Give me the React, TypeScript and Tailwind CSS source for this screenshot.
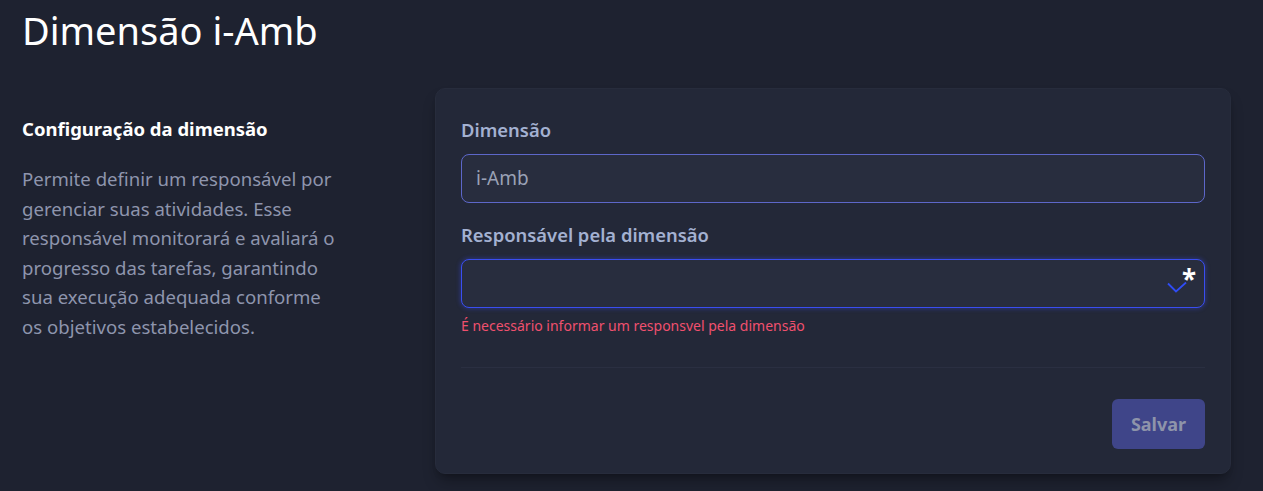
export default function App() {
  return (
    <div className="min-h-screen bg-[#1e2230] font-['Segoe_UI','Noto_Sans',sans-serif] text-white">
      <h1 className="px-[22px] pt-[4px] text-[38px] leading-[52px] font-normal text-white">
        Dimensão i-Amb
      </h1>

      <div className="mt-[32px] flex pl-[22px]">
        {/* coluna de descrição */}
        <div className="w-[413px] shrink-0 pt-[30px]">
          <h2 className="text-[18.5px] leading-[22px] font-bold text-white">
            Configuração da dimensão
          </h2>
          <p className="mt-[24px] text-[18.6px] leading-[29.6px] text-[#8e95ad]">
            <span className="block">Permite definir um responsável por</span>
            <span className="block">gerenciar suas atividades. Esse</span>
            <span className="block">responsável monitorará e avaliará o</span>
            <span className="block">progresso das tarefas, garantindo</span>
            <span className="block">sua execução adequada conforme</span>
            <span className="block">os objetivos estabelecidos.</span>
          </p>
        </div>

        {/* formulário */}
        <div className="w-[796px] shrink-0 rounded-[10px] border border-[#272c3c] bg-[#232838] px-[25px] pt-[27px] pb-[24px] shadow-lg shadow-black/30">
          <label className="block text-[18.4px] leading-[28px] font-semibold text-[#a3b1d1]">
            Dimensão
          </label>
          <div className="mt-[10px] flex h-[49px] items-center rounded-[8px] border border-[#5d67c9] bg-[#282d3e] px-[14px] text-[19px] text-[#9aa1b5]">
            i-Amb
          </div>

          <label className="mt-[18px] block text-[18.4px] leading-[28px] font-semibold text-[#a3b1d1]">
            Responsável pela dimensão
          </label>
          <div className="relative mt-[10px] h-[49px] rounded-[8px] border border-[#3a4ef0] bg-[#282d3e] shadow-[0_0_4px_1px_rgba(59,78,240,0.35)]">
            <svg
              className="absolute right-[15px] top-[22px]"
              width="22"
              height="12"
              viewBox="0 0 22 12"
              fill="none"
            >
              <path d="M1 1.5 L9 9.5 L19 0.5" stroke="#2f4cf5" strokeWidth="1.8" />
            </svg>
            <span className="absolute right-[8px] top-[6px] text-[26px] leading-[26px] font-bold text-white">
              *
            </span>
          </div>
          <p className="mt-[8px] text-[14px] leading-[20px] text-[#f0506e]">
            É necessário informar um responsvel pela dimensão
          </p>

          <div className="mt-[31px] h-px bg-[#2a2f41]" />

          <div className="mt-[31px] flex justify-end">
            <button
              type="button"
              className="h-[50px] w-[93px] rounded-[6px] bg-[#3f4589] text-[18px] font-bold text-[#8e94aa]"
            >
              Salvar
            </button>
          </div>
        </div>
      </div>
    </div>
  )
}
